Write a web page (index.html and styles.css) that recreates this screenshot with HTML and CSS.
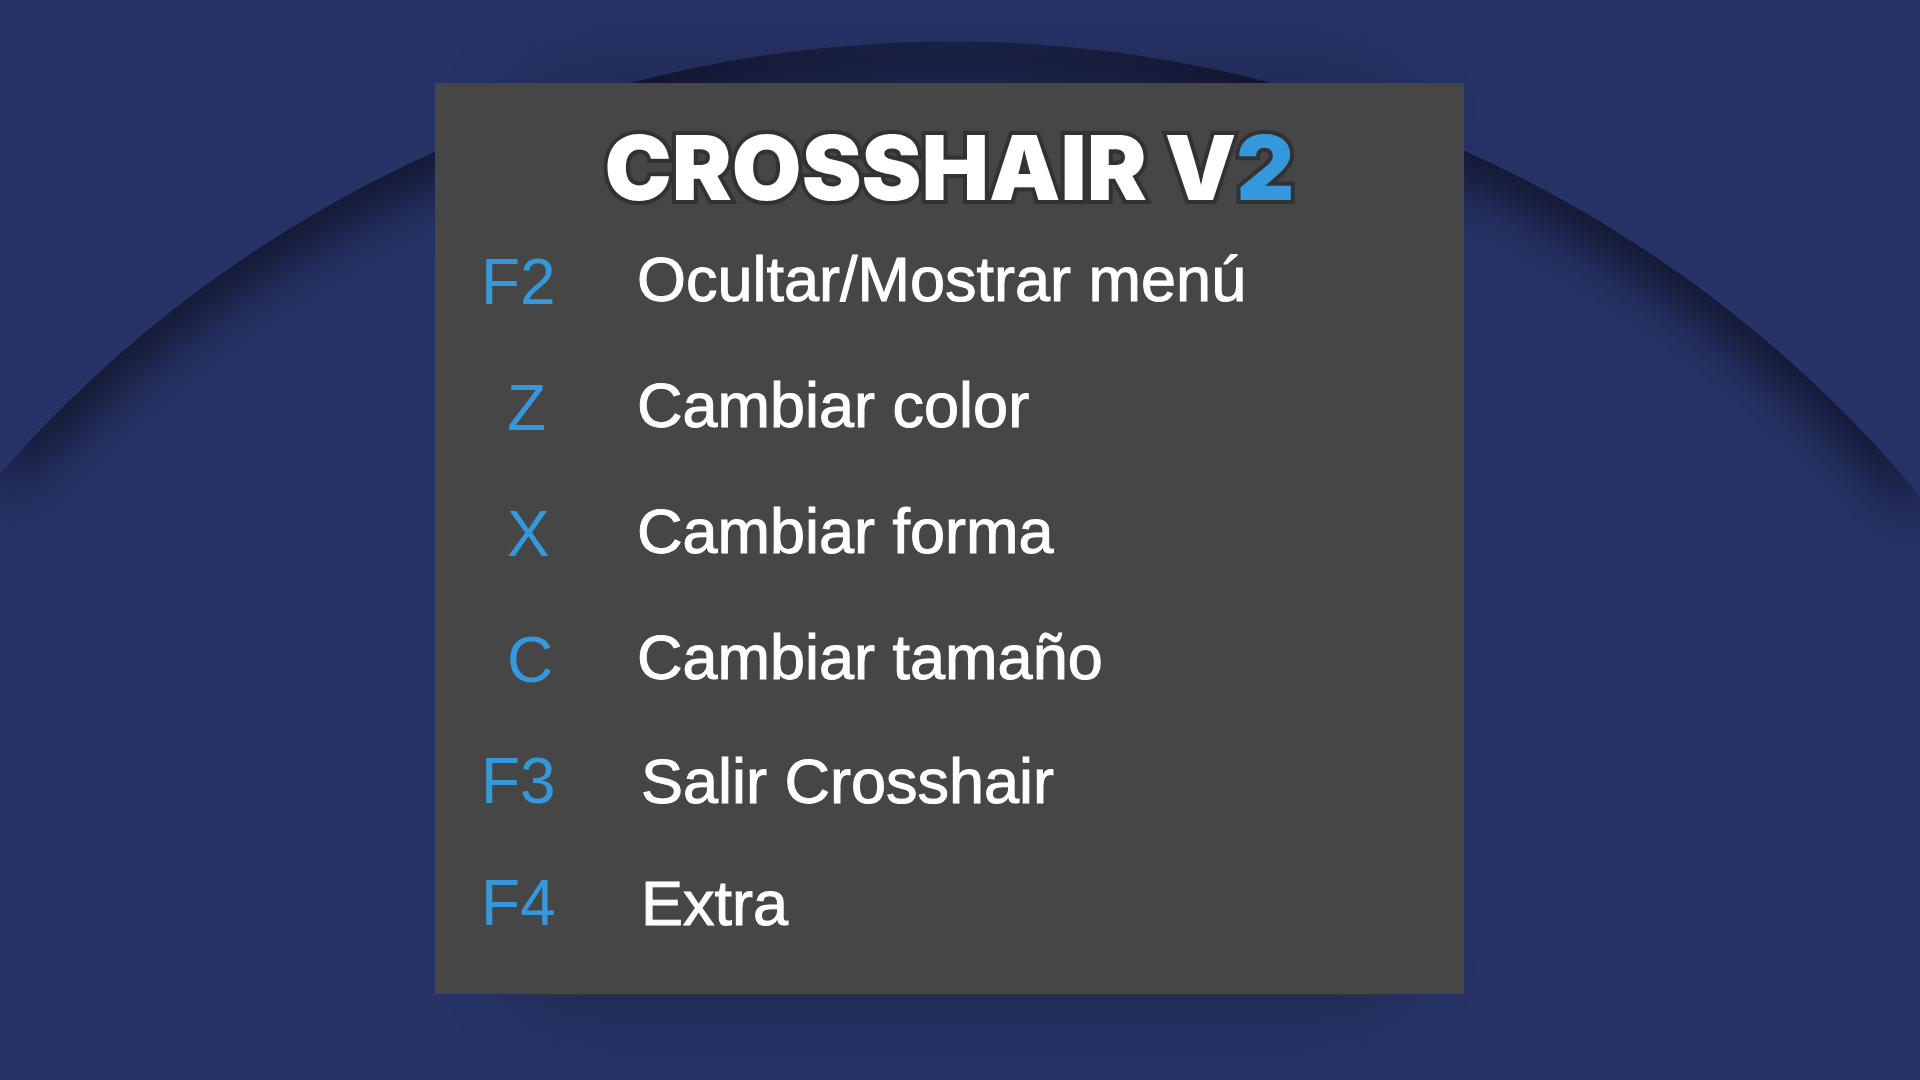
FILE: index.html
```
<!DOCTYPE html>
<html lang="es">
<head>
  <meta charset="UTF-8">
  <meta name="viewport" content="width=device-width, initial-scale=1.0">
  <title>Crosshair V2</title>
  <link rel="stylesheet" href="styles.css">
</head>
<body>
  <svg class="backdrop" viewBox="0 0 1920 1080" preserveAspectRatio="xMidYMin slice" aria-hidden="true">
    <path class="arch" d="M0 0H1920V496A1261 1261 0 0 0 0 474Z"/>
  </svg>
  <main class="menu">
    <h1 class="title">CROSSHAIR V<span class="version">2</span></h1>
    <ul class="keys crosshair-keys">
      <li class="row"><kbd class="key">F2</kbd><span class="label">Ocultar/Mostrar menú</span></li>
      <li class="row"><kbd class="key letter">Z</kbd><span class="label">Cambiar color</span></li>
      <li class="row"><kbd class="key letter">X</kbd><span class="label">Cambiar forma</span></li>
      <li class="row"><kbd class="key letter">C</kbd><span class="label">Cambiar tamaño</span></li>
    </ul>
    <ul class="keys app-keys">
      <li class="row"><kbd class="key">F3</kbd><span class="label">Salir Crosshair</span></li>
      <li class="row"><kbd class="key">F4</kbd><span class="label">Extra</span></li>
    </ul>
  </main>
</body>
</html>
```
FILE: styles.css
```
* {
  box-sizing: border-box;
}

body {
  display: flex;
  justify-content: center;
  align-items: flex-start;
  min-height: 100vh;
  margin: 0;
  padding: 83px 21px 0 0;
  background-color: #273266;
  font-family: "Liberation Sans", Arial, sans-serif;
}

.backdrop {
  position: absolute;
  z-index: -2;
  top: 0;
  left: 0;
  width: 100%;
  height: 100%;
}

.arch {
  fill: #273266;
  filter: drop-shadow(0 30px 27px rgba(0, 0, 0, 0.55));
}

.menu {
  position: relative;
  width: 100%;
  max-width: 1029px;
  padding: 37px 0 30px;
  background-color: #464646;
}

/* narrower card behind the menu that casts the soft shadow */
.menu::before {
  content: "";
  position: absolute;
  z-index: -1;
  top: 0;
  right: 76px;
  bottom: -2px;
  left: 95px;
  background-color: #333;
  box-shadow: 0 0 80px rgba(0, 0, 0, 0.25);
}

.title {
  margin: 0;
  color: #fff;
  font-family: Inter, sans-serif;
  font-size: 90px;
  font-weight: 900;
  line-height: 96px;
  text-align: center;
  -webkit-text-stroke: 8px #333;
  paint-order: stroke fill;
  text-shadow: 0 0 4px #333;
}

.version {
  color: #3498db;
}

.keys {
  margin: 0;
  padding: 0 0 0 46px;
  list-style: none;
}

.row {
  display: flex;
  align-items: center;
  height: 126px;
}

.key {
  width: 156px;
  color: #3498db;
  font-family: inherit;
  font-size: 64px;
}

.letter {
  padding-left: 26px;
}

.label {
  color: #fff;
  font-size: 63px;
  -webkit-text-stroke: 1px #fff;
}

.crosshair-keys .key {
  padding-top: 6px;
}

.app-keys .row {
  height: 122px;
}

.app-keys .key {
  width: 160px;
}
```
